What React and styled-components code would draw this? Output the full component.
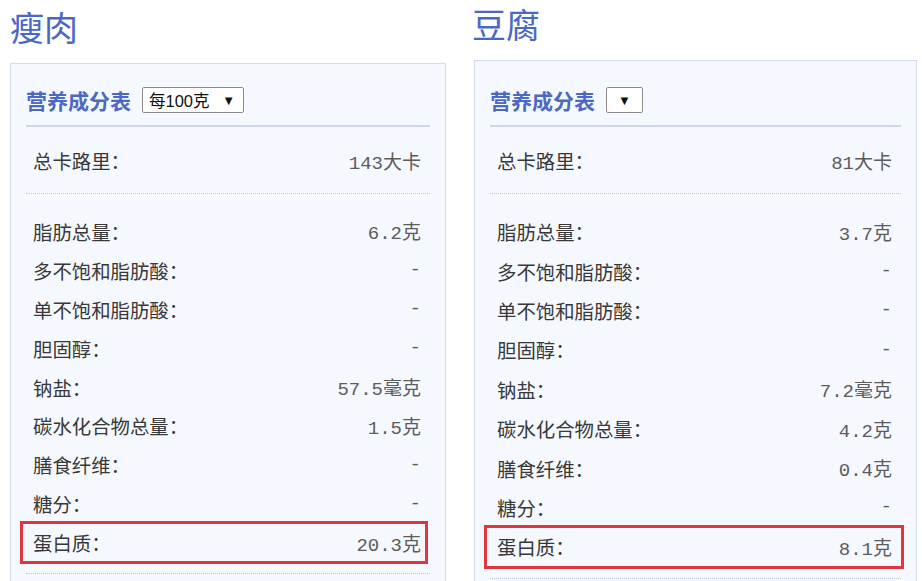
import React from "react";
import styled, { createGlobalStyle } from "styled-components";

const Global = createGlobalStyle`
  html, body { margin: 0; padding: 0; background: #fff; }
  body { font-family: "Noto Sans CJK SC", "Noto Sans", sans-serif; }
`;

const Page = styled.div`
  display: grid;
  grid-template-columns: 436px 443px;
  column-gap: 28px;
  padding: 0 0 0 10px;
  width: 922px;
  height: 581px;
  overflow: hidden;
  box-sizing: border-box;
`;

const Column = styled.section`
  display: flex;
  flex-direction: column;
  padding-top: ${(p) => p.$top}px;
`;

const Title = styled.h1`
  margin: 0 0 ${(p) => p.$gap}px ${(p) => p.$indent}px;
  font-size: 34px;
  line-height: 48px;
  font-weight: 400;
  color: #4867c6;
  font-family: "Noto Sans CJK SC", sans-serif;
`;

const Card = styled.div`
  border: 1px solid #d3ddee;
  border-bottom: none;
  background: #f5f8fe;
  padding: ${(p) => p.$pad}px 15px 0 15px;
  flex: 1;
`;

const Header = styled.div`
  display: flex;
  align-items: center;
  gap: 11px;
  padding-bottom: 12px;
  border-bottom: 2px solid #cfd8ea;
`;

const HeaderTitle = styled.span`
  font-size: 21px;
  line-height: 26px;
  font-weight: 700;
  color: #4a68c4;
`;

const Select = styled.div`
  display: flex;
  align-items: center;
  justify-content: ${(p) => (p.$empty ? "center" : "space-between")};
  box-sizing: border-box;
  width: ${(p) => p.$w}px;
  height: 26px;
  padding: 0 ${(p) => (p.$empty ? 0 : 8)}px 0 ${(p) => (p.$empty ? 0 : 6)}px;
  background: #fff;
  border: 1px solid #8d8d8d;
  border-radius: 2px;
  font-family: "Liberation Sans", "Noto Sans CJK SC", sans-serif;
  font-size: 16.5px;
  color: #111;
`;

const Arrow = styled.span`
  font-size: 13px;
  line-height: 1;
  color: #111;
`;

const Section = styled.div`
  padding: ${(p) => p.$pt}px 0 ${(p) => p.$pb}px 0;
  border-bottom: 1px dotted #bcc6d9;
`;

const Row = styled.div`
  position: relative;
  display: flex;
  align-items: center;
  justify-content: space-between;
  height: ${(p) => p.$h}px;
  padding: 0 9px 0 7px;
`;

const Label = styled.span`
  font-size: 19.4px;
  color: #383838;
`;

const Value = styled.span`
  font-family: "Liberation Mono", "Noto Sans CJK SC", monospace;
  font-size: 19px;
  color: #5c5c5c;
`;

const Highlight = styled.div`
  position: absolute;
  left: -6px;
  right: ${(p) => p.$right}px;
  top: -2px;
  bottom: -2px;
  border: 3px solid #e1363d;
  pointer-events: none;
`;

const foods = [
  {
    name: "瘦肉",
    top: 3,
    gap: 12,
    indent: 0,
    pad: 23,
    rowH: 38.9,
    hlRight: 2,
    select: "每100克",
    selW: 102,
    kcal: "143大卡",
    rows: [
      ["脂肪总量：", "6.2克"],
      ["多不饱和脂肪酸：", "-"],
      ["单不饱和脂肪酸：", "-"],
      ["胆固醇：", "-"],
      ["钠盐：", "57.5毫克"],
      ["碳水化合物总量：", "1.5克"],
      ["膳食纤维：", "-"],
      ["糖分：", "-"],
      ["蛋白质：", "20.3克", true],
    ],
  },
  {
    name: "豆腐",
    top: 0,
    gap: 12,
    indent: -2,
    pad: 26,
    rowH: 39.4,
    hlRight: -3,
    select: "",
    selW: 37,
    kcal: "81大卡",
    rows: [
      ["脂肪总量：", "3.7克"],
      ["多不饱和脂肪酸：", "-"],
      ["单不饱和脂肪酸：", "-"],
      ["胆固醇：", "-"],
      ["钠盐：", "7.2毫克"],
      ["碳水化合物总量：", "4.2克"],
      ["膳食纤维：", "0.4克"],
      ["糖分：", "-"],
      ["蛋白质：", "8.1克", true],
    ],
  },
];

function FoodPanel({ f }) {
  return (
    <Column $top={f.top}>
      <Title $gap={f.gap} $indent={f.indent}>{f.name}</Title>
      <Card $pad={f.pad}>
        <Header>
          <HeaderTitle>营养成分表</HeaderTitle>
          <Select $w={f.selW} $empty={!f.select}>
            {f.select && <span>{f.select}</span>}
            <Arrow>▼</Arrow>
          </Select>
        </Header>
        <Section $pt={14} $pb={13}>
          <Row $h={39}>
            <Label>总卡路里：</Label>
            <Value>{f.kcal}</Value>
          </Row>
        </Section>
        <Section $pt={18} $pb={11}>
          {f.rows.map(([l, v, hl]) => (
            <Row key={l} $h={f.rowH}>
              <Label>{l}</Label>
              <Value>{v}</Value>
              {hl && <Highlight $right={f.hlRight} />}
            </Row>
          ))}
        </Section>
      </Card>
    </Column>
  );
}

export default function App() {
  return (
    <>
      <Global />
      <Page>
        {foods.map((f) => (
          <FoodPanel key={f.name} f={f} />
        ))}
      </Page>
    </>
  );
}
